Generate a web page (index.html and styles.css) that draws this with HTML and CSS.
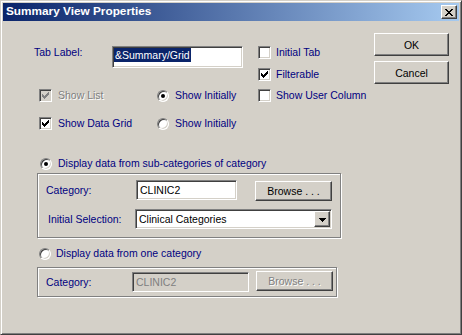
FILE: index.html
```html
<!DOCTYPE html>
<html>
<head>
<meta charset="utf-8">
<title>Summary View Properties</title>
<link rel="stylesheet" href="styles.css">
</head>
<body>
<div class="window">
  <div class="titlebar">
    <span class="title">Summary View Properties</span>
    <span class="close-btn">
      <svg width="8" height="7" viewBox="0 0 8 7" shape-rendering="crispEdges">
        <rect x="0" y="0" width="2" height="1"/><rect x="6" y="0" width="2" height="1"/>
        <rect x="1" y="1" width="2" height="1"/><rect x="5" y="1" width="2" height="1"/>
        <rect x="2" y="2" width="4" height="1"/>
        <rect x="3" y="3" width="2" height="1"/>
        <rect x="2" y="4" width="4" height="1"/>
        <rect x="1" y="5" width="2" height="1"/><rect x="5" y="5" width="2" height="1"/>
        <rect x="0" y="6" width="2" height="1"/><rect x="6" y="6" width="2" height="1"/>
      </svg>
    </span>
  </div>
  <div class="body">
    <div class="top">
      <div class="props">
        <div class="tab-row">
          <span class="tab-label">Tab Label:</span>
          <span class="edit tab-edit"><span class="sel">&amp;Summary/Grid</span></span>
        </div>
        <div class="check right r1"><span class="box"></span><span>Initial Tab</span></div>
        <div class="check right r2"><span class="box"><svg class="tick" width="11" height="11" viewBox="0 0 11 11" shape-rendering="crispEdges"><rect x="2" y="4" width="1" height="3"/><rect x="3" y="5" width="1" height="3"/><rect x="4" y="6" width="1" height="3"/><rect x="5" y="5" width="1" height="3"/><rect x="6" y="4" width="1" height="3"/><rect x="7" y="3" width="1" height="3"/><rect x="8" y="2" width="1" height="3"/></svg></span><span>Filterable</span></div>
        <div class="check right r3"><span class="box"></span><span>Show User Column</span></div>
        <div class="check left r3 disabled"><span class="box"><svg class="tick" width="11" height="11" viewBox="0 0 11 11" shape-rendering="crispEdges"><rect x="2" y="4" width="1" height="3"/><rect x="3" y="5" width="1" height="3"/><rect x="4" y="6" width="1" height="3"/><rect x="5" y="5" width="1" height="3"/><rect x="6" y="4" width="1" height="3"/><rect x="7" y="3" width="1" height="3"/><rect x="8" y="2" width="1" height="3"/></svg></span><span class="dis-text">Show List</span></div>
        <div class="radio mid r3"><span class="rb on"></span><span>Show Initially</span></div>
        <div class="check left r4"><span class="box"><svg class="tick" width="11" height="11" viewBox="0 0 11 11" shape-rendering="crispEdges"><rect x="2" y="4" width="1" height="3"/><rect x="3" y="5" width="1" height="3"/><rect x="4" y="6" width="1" height="3"/><rect x="5" y="5" width="1" height="3"/><rect x="6" y="4" width="1" height="3"/><rect x="7" y="3" width="1" height="3"/><rect x="8" y="2" width="1" height="3"/></svg></span><span>Show Data Grid</span></div>
        <div class="radio mid r4"><span class="rb"></span><span>Show Initially</span></div>
      </div>
      <div class="buttons">
        <div class="btn dlg-btn">OK</div>
        <div class="btn dlg-btn">Cancel</div>
      </div>
    </div>

    <div class="source">
      <div class="radio src-radio1"><span class="rb on"></span><span>Display data from sub-categories of category</span></div>
      <div class="group group1">
        <div class="grow">
          <span class="glabel cat-label">Category:</span>
          <span class="edit cat-edit">CLINIC2</span>
          <span class="btn browse">Browse . . .</span>
        </div>
        <div class="grow grow2">
          <span class="glabel sel-label">Initial Selection:</span>
          <span class="edit combo">
            <span class="combo-text">Clinical Categories</span>
            <span class="btn combo-btn">
              <svg width="7" height="4" viewBox="0 0 7 4" shape-rendering="crispEdges"><rect x="0" y="0" width="7" height="1"/><rect x="1" y="1" width="5" height="1"/><rect x="2" y="2" width="3" height="1"/><rect x="3" y="3" width="1" height="1"/></svg>
            </span>
          </span>
        </div>
      </div>
      <div class="radio src-radio2"><span class="rb"></span><span>Display data from one category</span></div>
      <div class="group group2">
        <div class="grow">
          <span class="glabel cat2-label">Category:</span>
          <span class="edit cat2-edit disabled">CLINIC2</span>
          <span class="btn browse browse2">Browse . . .</span>
        </div>
      </div>
    </div>
  </div>
</div>
</body>
</html>
```

FILE: styles.css
```css
* { box-sizing: border-box; }
html, body { margin: 0; padding: 0; }
body {
  width: 462px;
  height: 335px;
  overflow: hidden;
  background: #d4d0c8;
  font-family: "Liberation Sans", Arial, sans-serif;
  font-size: 10.5px;
  color: #000080;
}
.window {
  width: 462px;
  height: 335px;
  border: 1px solid;
  border-color: #d4d0c8 #404040 #404040 #d4d0c8;
  box-shadow: inset 1px 1px #fff, inset -1px -1px #808080;
  padding: 2px;
  background: #d4d0c8;
  display: flex;
  flex-direction: column;
}
.titlebar {
  height: 18px;
  flex: none;
  display: flex;
  align-items: flex-start;
  background: linear-gradient(to right, #0a246a, #a6caf0);
}
.title {
  flex: 1;
  padding-left: 3px;
  color: #fff;
  font-weight: bold;
  font-size: 11.8px;
  line-height: 17px;
  white-space: nowrap;
}
.close-btn {
  width: 16px;
  height: 14px;
  margin: 2px 2px 0 0;
  background: #d4d0c8;
  border: 1px solid;
  border-color: #fff #404040 #404040 #fff;
  box-shadow: inset -1px -1px #808080;
  display: flex;
  align-items: center;
  justify-content: center;
}
.close-btn svg { fill: #000; display: block; }

.body { flex: 1; }
.top { display: flex; align-items: flex-start; }
.props {
  margin: 25px 0 0 31px;
  display: grid;
  grid-template-columns: 123px 101px auto;
  grid-template-rows: 22px 21px 28px 13px;
}
.tab-row { grid-column: 1 / 3; grid-row: 1; display: flex; align-items: flex-start; }
.tab-label { width: 78px; line-height: 13px; }
.edit {
  border: 1px solid;
  border-color: #808080 #fff #fff #808080;
  box-shadow: inset 1px 1px #404040, inset -1px -1px #d4d0c8;
  background: #fff;
  color: #000;
  white-space: nowrap;
}
.tab-edit { width: 131px; height: 22px; padding: 1px 0 0 1px; line-height: 14px; }
.sel { display: inline-block; background: #0a246a; color: #fff; padding: 0 1px; line-height: 14px; }

.check, .radio {
  display: flex;
  align-items: center;
  height: 13px;
  line-height: 13px;
  gap: 6px;
  white-space: nowrap;
  align-self: start;
}
.right { grid-column: 3; gap: 5px; }
.left { grid-column: 1; margin-left: 5px; }
.mid { grid-column: 2; }
.r1 { grid-row: 1; }
.r2 { grid-row: 2; }
.r3 { grid-row: 3; }
.r4 { grid-row: 4; }
.box {
  width: 13px;
  height: 13px;
  flex: none;
  border: 1px solid;
  border-color: #808080 #fff #fff #808080;
  box-shadow: inset 1px 1px #404040, inset -1px -1px #d4d0c8;
  background: #fff;
}
.tick { display: block; fill: #000; }
.disabled .box { background: #d4d0c8; }
.disabled .tick { fill: #808080; }
.dis-text { color: #808080; text-shadow: 1px 1px #fff; }

.rb {
  width: 12px;
  height: 12px;
  flex: none;
  border-radius: 50%;
  border: 1px solid;
  border-color: #808080 #fff #fff #808080;
  box-shadow: inset 1px 1px #404040, inset -1px -1px #d4d0c8;
  background: #fff;
  display: flex;
  align-items: center;
  justify-content: center;
}
.rb.on::after {
  content: "";
  width: 4px;
  height: 4px;
  border-radius: 50%;
  background: #000;
}

.buttons {
  margin: 12px 10px 0 auto;
  display: flex;
  flex-direction: column;
  gap: 5px;
}
.btn {
  background: #d4d0c8;
  border: 1px solid;
  border-color: #fff #404040 #404040 #fff;
  box-shadow: inset -1px -1px #808080;
  color: #000;
  display: flex;
  align-items: center;
  justify-content: center;
  white-space: nowrap;
  flex: none;
}
.dlg-btn { width: 75px; height: 23px; }

.source { margin: 27px 0 0 34px; }
.src-radio1 { margin-left: 3px; }
.src-radio2 { margin: 9px 0 0 2px; gap: 5px; }
.group {
  border: 1px solid #808080;
  box-shadow: inset 1px 1px #fff, 1px 1px #fff;
}
.group1 { width: 304px; height: 65px; padding: 6px 0 0 8px; margin-top: 3px; }
.group2 { width: 300px; height: 30px; padding: 3px 0 0 8px; margin-top: 7px; }
.grow { display: flex; align-items: flex-start; }
.grow2 { margin-top: 8px; }
.glabel { line-height: 20px; height: 20px; white-space: nowrap; }
.cat-label { width: 90px; }
.sel-label { width: 87px; margin-left: 2px; }
.cat2-label { width: 86px; margin-top: 1px; }
.cat-edit { width: 101px; height: 20px; padding: 1px 3px; line-height: 16px; }
.browse { width: 77px; height: 20px; margin: 1px 0 0 18px; }
.combo { width: 197px; height: 20px; padding: 1px; display: flex; line-height: 16px; }
.combo-text { flex: 1; padding-left: 2px; }
.combo-btn { width: 16px; height: 16px; }
.combo-btn svg { display: block; fill: #000; margin-top: 1px; }
.cat2-edit { width: 117px; height: 20px; padding: 1px 3px; line-height: 16px; margin-top: 1px; }
.edit.disabled { background: #d4d0c8; color: #808080; }
.btn.browse2 { margin: 0 0 0 7px; color: #808080; text-shadow: 1px 1px #fff; }
```
